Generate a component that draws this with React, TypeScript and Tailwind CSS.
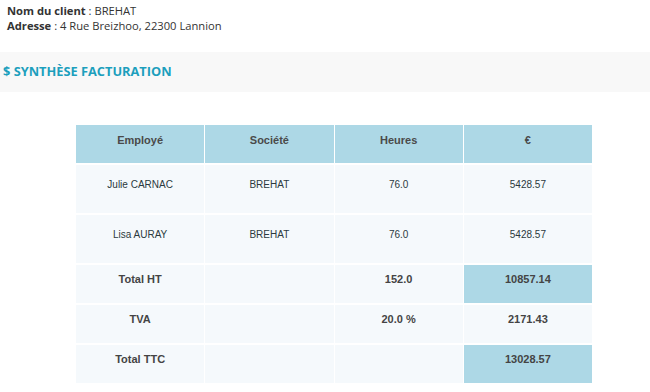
import React from 'react';

const rows = [
  { emp: 'Julie CARNAC', soc: 'BREHAT', h: '76.0', e: '5428.57' },
  { emp: 'Lisa AURAY', soc: 'BREHAT', h: '76.0', e: '5428.57' },
];

const totals = [
  { label: 'Total HT', h: '152.0', e: '10857.14', hl: true },
  { label: 'TVA', h: '20.0 %', e: '2171.43', hl: false },
  { label: 'Total TTC', h: '', e: '13028.57', hl: true },
];

export default function App() {
  return (
    <div className="w-[650px] h-[392px] bg-white overflow-hidden font-['Open_Sans',sans-serif]">
      {/* Client info */}
      <div className="pt-[3px] pl-[7px] text-[11.2px] leading-[15px] text-[#333]">
        <div>
          <span className="font-bold">Nom du client</span> : BREHAT
        </div>
        <div>
          <span className="font-bold">Adresse</span> : 4 Rue Breizhoo, 22300 Lannion
        </div>
      </div>

      {/* Section title */}
      <div className="mt-[19px] h-[40px] bg-[#f8f8f8] flex items-center pl-[3px]">
        <h2 className="text-[12.8px] font-bold text-[#1c9fbd]">
          $ SYNTHÈSE FACTURATION
        </h2>
      </div>

      {/* Table */}
      <div className="mt-[33px] ml-[76px] w-[516px] flex flex-col gap-[2px] font-['Liberation_Sans',Arial,sans-serif]">
        <div className="grid grid-cols-4 gap-x-px h-[38px]">
          {['Employé', 'Société', 'Heures', '€'].map((t) => (
            <div key={t} className="bg-[#add8e6] text-center text-[11px] font-bold text-[#4a4a4a] pt-[7px]">
              {t}
            </div>
          ))}
        </div>
        {rows.map((r, i) => (
          <div key={i} className="grid grid-cols-4 gap-x-px h-[48px]">
            {[r.emp, r.soc, r.h, r.e].map((t, j) => (
              <div key={j} className="bg-[#f5f9fc] text-center text-[10px] text-[#2b3a40] pt-[12px]">
                {t}
              </div>
            ))}
          </div>
        ))}
        {totals.map((r, i) => (
          <div key={i} className="grid grid-cols-4 gap-x-px h-[38px]">
            <div className="bg-[#f5f9fc] text-center text-[11px] font-bold text-[#444] pt-[6px]">{r.label}</div>
            <div className="bg-[#f5f9fc]" />
            <div className="bg-[#f5f9fc] text-center text-[11px] font-bold text-[#444] pt-[6px]">{r.h}</div>
            <div
              className={`${r.hl ? 'bg-[#add8e6]' : 'bg-[#f5f9fc]'} text-center text-[11px] font-bold text-[#444] pt-[6px]`}
            >
              {r.e}
            </div>
          </div>
        ))}
      </div>
    </div>
  );
}
